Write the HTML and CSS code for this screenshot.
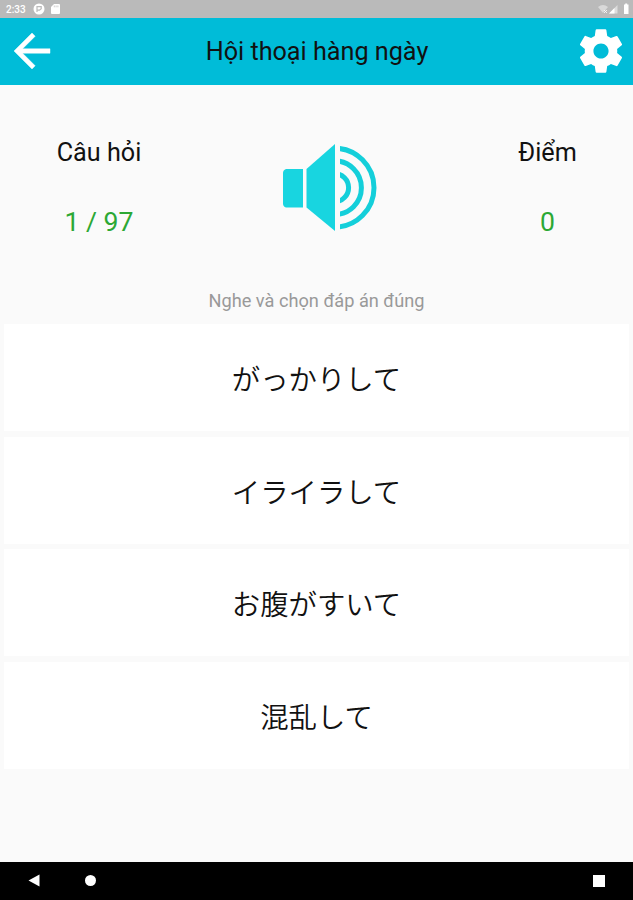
FILE: index.html
```
<!DOCTYPE html>
<html lang="vi">
<head>
    <meta charset="UTF-8">
    <meta name="viewport" content="width=device-width, initial-scale=1.0">
    <title>Hội thoại hàng ngày</title>
    <link rel="stylesheet" href="styles.css">
</head>
<body>
    <div class="status-bar">
        <span class="time">2:33</span>
        <svg class="status-app" viewBox="0 0 12 12">
            <circle cx="6" cy="6" r="5.5" fill="#fff"/>
            <path d="M4 9V3.700h4.200v2L6.500 7.200H4" fill="none" stroke="#bbb" stroke-width="1.2"/>
        </svg>
        <svg class="status-card" viewBox="0 0 9 10">
            <path d="M3 0h5q1 0 1 1v8q0 1-1 1H1q-1 0-1-1V3z" fill="#fff"/>
            <path d="M3.300 1.500v1.800M5.100 1.500v1.800M6.900 1.500v1.800" stroke="#bbb" stroke-width=".7"/>
        </svg>
        <svg class="status-right" viewBox="0 0 32 12">
            <path d="M0 4q5-4 10 0L5 10z" fill="#fff" opacity=".45"/>
            <path d="M6 7l3 3M9 7l-3 3" stroke="#fff" stroke-width=".8"/>
            <path d="M11 10.500l8.500-8.500v8.500z" fill="#fff" opacity=".5"/>
            <path d="M11 10.500l5.500-5.500v5.500z" fill="#fff"/>
            <path d="M26 1.500h1.200V.5h2v1h1.300v9.500H26z" fill="#fff"/>
        </svg>
    </div>

    <header class="toolbar">
        <svg class="icon" viewBox="0 0 24 24">
            <path d="M20 11H7.830l5.590-5.590L12 4l-8 8 8 8 1.410-1.410L7.830 13H20v-2z" stroke="#fff" stroke-width=".2"/>
        </svg>
        <h1>Hội thoại hàng ngày</h1>
        <svg class="icon icon-settings" viewBox="0 0 24 24">
            <path d="M19.430 12.980c.04-.32.07-.64.07-.98s-.03-.66-.07-.98l2.110-1.650c.19-.15.24-.42.12-.64l-2-3.460c-.12-.22-.39-.3-.61-.22l-2.490 1c-.52-.4-1.080-.73-1.690-.98l-.38-2.650C14.460 2.180 14.250 2 14 2h-4c-.25 0-.46.18-.49.42l-.38 2.650c-.61.25-1.170.59-1.690.98l-2.490-1c-.23-.09-.49 0-.61.22l-2 3.460c-.13.22-.07.49.12.64l2.110 1.650c-.04.32-.07.65-.07.98s.03.66.07.98l-2.110 1.650c-.19.15-.24.42-.12.64l2 3.460c.12.22.39.3.61.22l2.490-1c.52.4 1.080.73 1.690.98l.38 2.650c.03.24.24.42.49.42h4c.25 0 .46-.18.49-.42l.38-2.650c.61-.25 1.170-.59 1.690-.98l2.490 1c.23.09.49 0 .61-.22l2-3.460c.12-.22.07-.49-.12-.64l-2.110-1.650zM12 15.500c-1.930 0-3.500-1.570-3.500-3.500s1.570-3.500 3.500-3.500 3.500 1.570 3.500 3.500-1.570 3.500-3.500 3.500z"/>
        </svg>
    </header>

    <main>
        <section class="summary">
            <div class="stat">
                <p class="label">Câu hỏi</p>
                <p class="value">1 / 97</p>
            </div>
            <svg class="speaker" viewBox="0 0 94 88">
                <clipPath id="waves"><path d="M57 0h37v88H57z"/></clipPath>
                <path d="M3 25H20v38.500H3q-3-1-3-4V29q0-3 3-4z" fill="#18d5e0"/>
                <path d="M23.500 25L52 0v87L23.500 63.500z" fill="#18d5e0"/>
                <g clip-path="url(#waves)" fill="none" stroke="#14cfda" stroke-width="5">
                    <circle cx="51.600" cy="43.700" r="39.400"/>
                    <circle cx="51.600" cy="43.700" r="26.800"/>
                    <circle cx="51.600" cy="43.700" r="14"/>
                </g>
            </svg>
            <div class="stat">
                <p class="label">Điểm</p>
                <p class="value">0</p>
            </div>
        </section>

        <p class="hint">Nghe và chọn đáp án đúng</p>

        <div class="answers" lang="ja">
            <div class="answer">がっかりして</div>
            <div class="answer">イライラして</div>
            <div class="answer">お腹がすいて</div>
            <div class="answer">混乱して</div>
        </div>
    </main>

    <nav class="nav-bar">
        <svg class="nav-back" viewBox="0 0 12 13"><path d="M11.500.5v12L.5 6.500z" fill="#fff"/></svg>
        <span class="nav-home"></span>
        <span class="nav-recent"></span>
    </nav>
</body>
</html>
```
FILE: styles.css
```
* {
    box-sizing: border-box;
}
body {
    display: flex;
    flex-direction: column;
    height: 100vh;
    margin: 0;
    overflow: hidden;
    background-color: #fafafa;
    color: #111;
    font-family: Roboto, "Noto Sans CJK JP", sans-serif;
}
h1, p {
    margin: 0;
    font-weight: 400;
}
.status-bar {
    display: flex;
    align-items: center;
    height: 18px;
    padding: 0 3px 0 6px;
    background-color: #bababa;
    color: #fff;
}
.time {
    width: 27px;
    font-size: 10px;
    font-weight: 500;
}
.status-app {
    width: 12px;
    height: 12px;
}
.status-card {
    width: 9px;
    height: 10px;
    margin-left: 6px;
}
.status-right {
    width: 32px;
    height: 12px;
    margin-left: auto;
}
.toolbar {
    display: flex;
    align-items: center;
    justify-content: space-between;
    height: 67px;
    padding: 0 6px 1px 5px;
    background-color: #00bcd8;
}
.toolbar h1 {
    padding-top: 2px;
    font-size: 25.2px;
    line-height: 30px;
}
.icon {
    width: 54px;
    height: 54px;
    fill: #fff;
}
.icon-settings {
    width: 52px;
    height: 52px;
}
main {
    flex: 1;
}
.summary {
    display: flex;
    justify-content: space-between;
    height: 205px;
    padding-top: 53px;
}
.stat {
    width: 198px;
    text-align: center;
}
.stat:last-child {
    width: 171px;
}
.label {
    font-size: 25.2px;
    line-height: 30px;
}
.value {
    margin-top: 39px;
    color: #2ca834;
    font-size: 26.6px;
    line-height: 30px;
}
.speaker {
    width: 94px;
    height: 88px;
    margin: 6px 0 0 -1px;
}
.hint {
    height: 34px;
    color: #999;
    font-size: 18.2px;
    line-height: 22px;
    text-align: center;
}
.answers {
    display: flex;
    flex-direction: column;
    gap: 5.5px;
    padding: 0 4px;
}
.answer {
    display: flex;
    align-items: center;
    justify-content: center;
    height: 107px;
    background-color: #fff;
    font-size: 28.4px;
    font-weight: 350;
}
.nav-bar {
    display: flex;
    align-items: center;
    height: 38px;
    padding: 0 28px 1px;
    background-color: #000;
}
.nav-back {
    width: 12px;
    height: 13px;
}
.nav-home {
    width: 11px;
    height: 11px;
    margin-left: 45px;
    border-radius: 50%;
    background-color: #fff;
}
.nav-recent {
    width: 12px;
    height: 12px;
    margin-left: auto;
    background-color: #fff;
}
```
